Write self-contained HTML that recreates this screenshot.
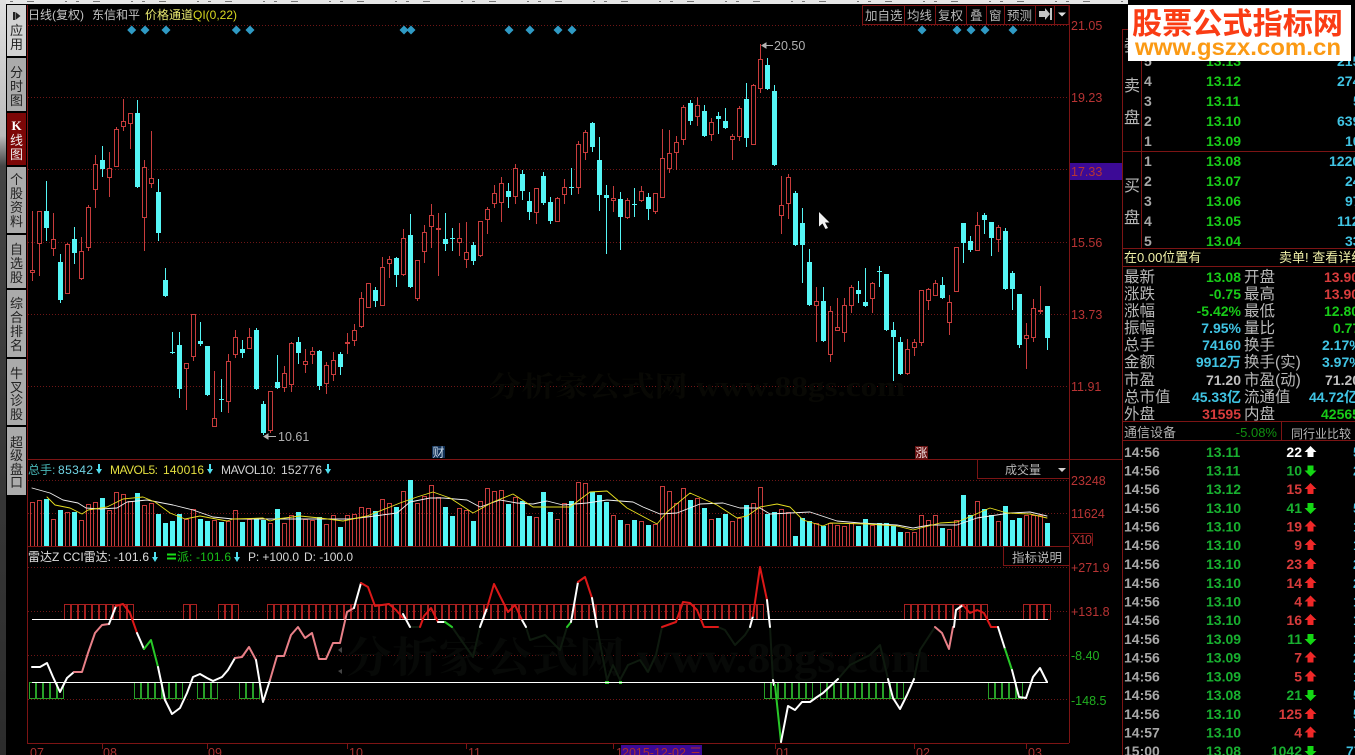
<!DOCTYPE html>
<html><head><meta charset="utf-8"><title>K线图</title>
<style>
html,body{margin:0;padding:0;background:#000;width:1355px;height:755px;overflow:hidden}
svg{display:block;position:absolute;left:0;top:0}
text{font-family:"Liberation Sans","Noto Sans CJK SC",sans-serif;white-space:pre}
.a{fill:#b83434;font-size:12.5px}
.g{fill:#20b020;font-size:12.5px}
.t{font-size:12px;fill:#c4c4c4}
.s{font-size:13px;fill:#222;text-anchor:middle}
.lb{font-size:16px;fill:#b8b8b8}
.n{font-size:14px;font-weight:bold}
.e{text-anchor:end}
.gr{fill:#18cc18}.cy{fill:#40c4e4}.rd{fill:#d83c3c}.wh{fill:#b8b8b8}.gd{fill:#c0c0c0}
.tm{font-size:14px;font-weight:bold;fill:#a8a8a8}
.pr{font-size:14px;font-weight:bold;fill:#18b030}
.bt{font-size:12.5px;fill:#b8b8b8}
</style></head>
<body>
<svg id="s" xmlns="http://www.w3.org/2000/svg" width="1355" height="755" viewBox="0 0 1355 755" shape-rendering="crispEdges">
<defs><linearGradient id="lg" x1="0" y1="0" x2="0" y2="1"><stop offset="0" stop-color="#e0e0e0"/><stop offset=".18" stop-color="#bbb"/><stop offset=".22" stop-color="#444"/><stop offset="1" stop-color="#2c2c2c"/></linearGradient></defs>
<rect width="1355" height="755" fill="#000"/>
<rect x="0" y="0" width="6" height="755" fill="url(#lg)"/>
<rect x="6" y="0" width="1122" height="4" fill="#e6e6e6"/>
<path d="M10 1.5H1128" stroke="#777" stroke-width="1" stroke-dasharray="3 14 7 31 2 9" fill="none"/>

<!-- sidebar -->
<g shape-rendering="auto">
<rect x="7" y="5" width="19" height="51" fill="#d2d2d2"/>
<rect x="7" y="58" width="19" height="53" fill="#ababab"/>
<rect x="7" y="113" width="19" height="52" fill="#7c0606"/>
<rect x="7" y="167" width="19" height="66" fill="#ababab"/>
<rect x="7" y="235" width="19" height="53" fill="#ababab"/>
<rect x="7" y="290" width="19" height="67" fill="#ababab"/>
<rect x="7" y="359" width="19" height="66" fill="#ababab"/>
<rect x="7" y="427" width="19" height="68" fill="#ababab"/>
<path d="M13 12v8h2v-8zM15.5 12v8l5-4z" fill="#222"/>
<text class="s" x="16.5" y="35">应</text><text class="s" x="16.5" y="49">用</text>
<text class="s" x="16.5" y="77">分</text><text class="s" x="16.5" y="91">时</text><text class="s" x="16.5" y="105">图</text>
<text x="16.5" y="130" style="font-family:'Liberation Serif';font-weight:bold;font-size:13px;fill:#fff;text-anchor:middle">K</text>
<text class="s" x="16.5" y="145" style="fill:#eee">线</text><text class="s" x="16.5" y="159" style="fill:#eee">图</text>
<text class="s" x="16.5" y="184">个</text><text class="s" x="16.5" y="198">股</text><text class="s" x="16.5" y="212">资</text><text class="s" x="16.5" y="226">料</text>
<text class="s" x="16.5" y="254">自</text><text class="s" x="16.5" y="268">选</text><text class="s" x="16.5" y="282">股</text>
<text class="s" x="16.5" y="308">综</text><text class="s" x="16.5" y="322">合</text><text class="s" x="16.5" y="336">排</text><text class="s" x="16.5" y="350">名</text>
<text class="s" x="16.5" y="378">牛</text><text class="s" x="16.5" y="392">叉</text><text class="s" x="16.5" y="405">诊</text><text class="s" x="16.5" y="419">股</text>
<text class="s" x="16.5" y="447">超</text><text class="s" x="16.5" y="460">级</text><text class="s" x="16.5" y="474">盘</text><text class="s" x="16.5" y="487">口</text>
</g>

<!-- grid -->
<g stroke="#6e1616" stroke-width="1" stroke-dasharray="1 2" fill="none">
<path d="M28 25.5H1069M28 97.5H1069M28 169.5H1069M28 242.5H1069M28 314.5H1069M28 386.5H1069M28 480.5H1069M28 513.5H1069M28 567.5H1069M28 611.5H1069M28 655.5H1069M28 699.5H1069"/>
</g>

<!-- watermark -->
<g shape-rendering="auto">
<text x="488" y="396" textLength="417" lengthAdjust="spacingAndGlyphs" style="font-family:'Liberation Serif','Noto Serif CJK SC',serif;font-size:28px;font-weight:bold;fill:#080804">分析家公式网 www.88gs.com</text>
<text x="345" y="672" textLength="585" lengthAdjust="spacingAndGlyphs" style="font-family:'Liberation Serif','Noto Serif CJK SC',serif;font-size:42px;font-weight:bold;fill:#070907">分析家公式网 www.88gs.com</text>
<path d="M342 647l-4 3 4 3zM342 669l-4 2 4 3z" fill="#444"/>
</g>

<g id="chart"></g>

<!-- frame -->
<g stroke="#7c1414" stroke-width="1" fill="none">
<path d="M27.5 5V743M1069.5 5V743M1122.5 29V755M27 459.5H1122M27 546.5H1069M27 743.5H1069"/>
<path d="M862.5 5.5H1069V24.5H862.5ZM904.5 5V24M935.5 5V24M966.5 5V24M986.5 5V24M1004.5 5V24M1035.5 5V24M1054.5 5V24"/>
<path d="M977.5 460V478.5H1069M1070.5 533.5H1092.5V546M1003.5 547V565.5H1069"/>
<path d="M102.5 743V749M207.5 743V749M347.5 743V749M466.5 743V749M613.5 743V749M775.5 743V749M914.5 743V749M1026.5 743V749"/>
<path d="M1122 29.5H1128M1122 151.5H1355M1122 248.5H1355M1122 266.5H1355M1122 421.5H1355M1122 440.5H1355M1141.5 29V248M1281.5 422V441"/>
</g>

<g shape-rendering="auto">
<!-- diamonds -->
<g fill="#2f9ac4" id="dm"></g>

<!-- title -->
<text class="t" x="28" y="19">日线(复权)</text>
<text class="t" x="92" y="19">东信和平</text>
<text class="t" x="145" y="19" style="fill:#e8e870">价格通道</text>
<text class="t" x="193" y="19" textLength="44" style="fill:#d8d820">QI(0,22)</text>

<!-- toolbar -->
<text class="bt" x="865" y="20">加自选</text>
<text class="bt" x="907" y="20">均线</text>
<text class="bt" x="938" y="20">复权</text>
<text class="bt" x="970" y="20">叠</text>
<text class="bt" x="989" y="20">窗</text>
<text class="bt" x="1007" y="20">预测</text>
<path d="M1039 11h6v-3l5 6-5 6v-3h-6zM1050 8h2v12h-2z" fill="#c4c4c4"/>
<path d="M1058 12.5h8l-4 4z" fill="#e0e0e0"/>

<!-- axis main -->
<rect x="1070" y="163" width="52" height="17" fill="#3c0a96"/>
<text class="a" x="1071" y="30">21.05</text>
<text class="a" x="1071" y="102">19.23</text>
<text class="a" x="1071" y="176">17.33</text>
<text class="a" x="1071" y="247">15.56</text>
<text class="a" x="1071" y="319">13.73</text>
<text class="a" x="1071" y="391">11.91</text>

<!-- hi lo labels -->
<path d="M773 45.5H764M766 43l-4 2.500 4 2.500z" stroke="#b4b4b4" fill="#b4b4b4"/>
<text x="774" y="50" style="font-size:12.500px;fill:#b0b0b0">20.50</text>
<path d="M276 436.500H266M268 434l-4 2.500 4 2.500z" stroke="#b4b4b4" fill="#b4b4b4"/>
<text x="278" y="441" style="font-size:12.500px;fill:#b0b0b0">10.61</text>

<!-- badges -->
<rect x="432" y="446" width="13" height="12" fill="#113056"/>
<text x="438.500" y="456.500" style="font-size:12px;fill:#c8d8e8;text-anchor:middle">财</text>
<rect x="915" y="446" width="13" height="13" fill="#661212"/>
<text x="921.500" y="457" style="font-size:12px;fill:#f0e0e0;text-anchor:middle">涨</text>

<!-- volume legend -->
<text class="t" x="28" y="474" style="fill:#48b8b8">总手:</text>
<text class="t" x="58" y="474" textLength="35" style="fill:#70d4e4">85342</text>
<text class="t" x="110" y="474" textLength="48" style="fill:#e4e040">MAVOL5:</text>
<text class="t" x="163" y="474" textLength="41" style="fill:#e4e040">140016</text>
<text class="t" x="221" y="474" textLength="55" style="fill:#d0d0d0">MAVOL10:</text>
<text class="t" x="281" y="474" textLength="41" style="fill:#d0d0d0">152776</text>
<text class="bt" x="1005" y="474" style="font-size:12px">成交量</text>
<path d="M1058 468h8l-4 4z" fill="#d0d0d0"/>
<text class="a" x="1071" y="485">23248</text>
<text class="a" x="1071" y="518">11624</text>
<text class="a" x="1072" y="544" textLength="20">X10</text>

<!-- cci legend -->
<text class="t" x="28" y="561" style="fill:#e0e0e0">雷达Z</text>
<text class="t" x="63" y="561" textLength="48" style="fill:#e0e0e0">CCI雷达:</text>
<text class="t" x="114" y="561" textLength="35" style="fill:#e0e0e0">-101.6</text>
<path d="M167 553.500h9v2h-9zM167 557.500h9v2h-9z" fill="#18e018"/>
<text class="t" x="177" y="561" style="fill:#18c018">派:</text>
<text class="t" x="196" y="561" textLength="35" style="fill:#18c018">-101.6</text>
<text class="t" x="248" y="561" textLength="51" style="fill:#d8d8d8">P: +100.0</text>
<text class="t" x="304" y="561" textLength="49" style="fill:#d8d8d8">D: -100.0</text>
<text class="bt" x="1012" y="562">指标说明</text>
<text class="a" x="1071" y="572">+271.9</text>
<text class="a" x="1071" y="616">+131.8</text>
<text class="g" x="1071" y="660">-8.40</text>
<text class="g" x="1071" y="705">-148.5</text>

<!-- date axis -->
<rect x="621" y="745" width="81" height="10" fill="#3c0a96"/>
<g style="font-size:12.500px;fill:#a83030">
<text x="30" y="757">07</text><text x="103" y="757">08</text><text x="208" y="757">09</text><text x="349" y="757">10</text><text x="468" y="757">11</text>
<text x="616" y="757">1</text><text x="622" y="757">2015-12-02 三</text>
<text x="776" y="757">01</text><text x="916" y="757">02</text><text x="1028" y="757">03</text>
</g>

<!-- cursor -->
<path d="M819 212V226.500L822.500 223.500L825.500 229L828 228L825 222.500H829.500Z" fill="#f0f0f0"/>

<!-- order book -->
<text class="n wh" x="1144" y="66">5</text>
<g class="n" style="fill:#a8a8a8"><text x="1144" y="86">4</text><text x="1144" y="106">3</text><text x="1144" y="126">2</text><text x="1144" y="146">1</text><text x="1144" y="166">1</text><text x="1144" y="186">2</text><text x="1144" y="206">3</text><text x="1144" y="226">4</text><text x="1144" y="246">5</text></g>
<g class="n gr"><text x="1206" y="66">13.13</text><text x="1206" y="86">13.12</text><text x="1206" y="106">13.11</text><text x="1206" y="126">13.10</text><text x="1206" y="146">13.09</text><text x="1206" y="166">13.08</text><text x="1206" y="186">13.07</text><text x="1206" y="206">13.06</text><text x="1206" y="226">13.05</text><text x="1206" y="246">13.04</text></g>
<g class="n cy"><text x="1337" y="66">215</text><text x="1337" y="86">274</text><text x="1353" y="106">5</text><text x="1337" y="126">639</text><text x="1345" y="146">10</text><text x="1329" y="166">1220</text><text x="1345" y="186">24</text><text x="1345" y="206">97</text><text x="1337" y="226">112</text><text x="1345" y="246">33</text></g>
<text class="lb" x="1124" y="51">委</text>
<text class="lb" x="1124" y="91">卖</text><text class="lb" x="1124" y="123">盘</text>
<text class="lb" x="1124" y="191">买</text><text class="lb" x="1124" y="223">盘</text>
<text x="1124" y="262" style="font-size:13px;fill:#f0f0a8">在0.00位置有</text>
<text x="1279" y="262" style="font-size:13px;fill:#f0f0a8">卖单! 查看详细</text>

<!-- stats -->
<g class="lb" style="font-size:15.500px">
<text x="1124" y="282">最新</text><text x="1124" y="299">涨跌</text><text x="1124" y="316">涨幅</text><text x="1124" y="333">振幅</text><text x="1124" y="350">总手</text><text x="1124" y="367">金额</text><text x="1124" y="385">市盈</text><text x="1124" y="402">总市值</text><text x="1124" y="419">外盘</text>
<text x="1244" y="282">开盘</text><text x="1244" y="299">最高</text><text x="1244" y="316">最低</text><text x="1244" y="333">量比</text><text x="1244" y="350">换手</text><text x="1244" y="367">换手(实)</text><text x="1244" y="385">市盈(动)</text><text x="1244" y="402">流通值</text><text x="1244" y="419">内盘</text>
</g>
<g class="n e">
<text class="gr" x="1241" y="282">13.08</text><text class="gr" x="1241" y="299">-0.75</text><text class="gr" x="1241" y="316">-5.42%</text><text class="cy" x="1241" y="333">7.95%</text><text class="cy" x="1241" y="350">74160</text><text class="cy" x="1241" y="367">9912万</text><text class="gd" x="1241" y="385">71.20</text><text class="cy" x="1241" y="402">45.33亿</text><text class="rd" x="1241" y="419">31595</text>
</g>
<g class="n">
<text class="rd" x="1324" y="282">13.90</text><text class="rd" x="1324" y="299">13.90</text><text class="gr" x="1324" y="316">12.80</text><text class="gr" x="1333" y="333">0.77</text><text class="cy" x="1322" y="350">2.17%</text><text class="cy" x="1322" y="367">3.97%</text><text class="gd" x="1325" y="385">71.20</text><text class="cy" x="1309" y="402">44.72亿</text><text class="gr" x="1321" y="419">42565</text>
</g>
<text x="1124" y="437" style="font-size:13px;fill:#b0b0b0">通信设备</text>
<text x="1277" y="437" style="font-size:13px;fill:#109010;text-anchor:end">-5.08%</text>
<text x="1291" y="438" style="font-size:12px;fill:#b8b8b8">同行业比较</text>

<!-- ticks -->
<g class="tm"><text x="1124" y="457">14:56</text><text x="1124" y="475.500">14:56</text><text x="1124" y="494">14:56</text><text x="1124" y="513">14:56</text><text x="1124" y="531.500">14:56</text><text x="1124" y="550">14:56</text><text x="1124" y="569">14:56</text><text x="1124" y="588">14:56</text><text x="1124" y="606.500">14:56</text><text x="1124" y="625">14:56</text><text x="1124" y="644">14:56</text><text x="1124" y="662.500">14:56</text><text x="1124" y="681.500">14:56</text><text x="1124" y="700">14:56</text><text x="1124" y="719">14:56</text><text x="1124" y="737.500">14:57</text><text x="1124" y="756">15:00</text></g>
<g class="pr"><text x="1206" y="457">13.11</text><text x="1206" y="475.500">13.11</text><text x="1206" y="494">13.12</text><text x="1206" y="513">13.10</text><text x="1206" y="531.500">13.10</text><text x="1206" y="550">13.10</text><text x="1206" y="569">13.10</text><text x="1206" y="588">13.10</text><text x="1206" y="606.500">13.10</text><text x="1206" y="625">13.10</text><text x="1206" y="644">13.09</text><text x="1206" y="662.500">13.09</text><text x="1206" y="681.500">13.09</text><text x="1206" y="700">13.08</text><text x="1206" y="719">13.10</text><text x="1206" y="737.500">13.10</text><text x="1206" y="756">13.08</text></g>
<g class="n e">
<text x="1302" y="457" style="fill:#fff">22</text>
<text x="1302" y="475.500" style="fill:#18b030">10</text>
<text x="1302" y="494" class="rd">15</text>
<text x="1302" y="513" style="fill:#18b030">41</text>
<text x="1302" y="531.500" class="rd">19</text>
<text x="1302" y="550" class="rd">9</text>
<text x="1302" y="569" class="rd">23</text>
<text x="1302" y="588" class="rd">14</text>
<text x="1302" y="606.500" class="rd">4</text>
<text x="1302" y="625" class="rd">16</text>
<text x="1302" y="644" style="fill:#18b030">11</text>
<text x="1302" y="662.500" class="rd">7</text>
<text x="1302" y="681.500" class="rd">5</text>
<text x="1302" y="700" style="fill:#18b030">21</text>
<text x="1302" y="719" class="rd">125</text>
<text x="1302" y="737.500" class="rd">4</text>
<text x="1302" y="756" style="fill:#18b030">1042</text>
</g>
<g id="arr"></g>
<g class="n cy"><text x="1353" y="457">5</text><text x="1353" y="475.500">2</text><text x="1353" y="513">5</text><text x="1353" y="531.500">1</text><text x="1353" y="550">1</text><text x="1353" y="569">2</text><text x="1353" y="588">2</text><text x="1353" y="606.500">1</text><text x="1353" y="625">1</text><text x="1353" y="644">1</text><text x="1353" y="662.500">2</text><text x="1353" y="681.500">1</text><text x="1353" y="700">5</text><text x="1353" y="719">5</text><text x="1353" y="737.500">1</text><text x="1346" y="756">77</text></g>

<!-- logo -->
<rect x="1128" y="5" width="223" height="56" fill="#fff"/>
<text x="1132" y="34" textLength="211" lengthAdjust="spacingAndGlyphs" style="font-family:'Noto Sans CJK SC','Liberation Sans',sans-serif;font-size:30px;font-weight:bold;fill:#fa3c14">股票公式指标网</text>
<text x="1135" y="55" textLength="206" lengthAdjust="spacingAndGlyphs" style="font-size:23px;font-weight:bold;fill:#fb9a14">www.gszx.com.cn</text>
</g>
</svg>
<script>
var NS="http://www.w3.org/2000/svg",ch=document.getElementById("chart");
function E(p,tag,a){var e=document.createElementNS(NS,tag);for(var k in a)e.setAttribute(k,a[k]);p.appendChild(e);return e}
var C=[[0,211,270,272,280],[0,211,211,243,275],[1,181,211,228,240],[0,213,239,248,255],[1,254,262,300,302],[0,243,244,293,293],[1,227,239,253,263],[0,237,251,278,279],[0,205,207,247,250],[0,155,164,189,207],
[1,146,160,169,176],[0,152,168,177,196],[0,127,129,166,166],[0,99,121,126,130],[0,113,113,123,148],[1,100,113,187,187],[0,160,167,217,250],[0,131,178,183,187],[1,179,192,233,240],[1,268,280,296,296],
[1,332,352,353,353],[1,332,345,389,397],[0,363,363,368,409],[0,314,314,356,360],[1,322,341,344,345],[1,346,346,395,395],[0,371,418,426,426],[1,379,399,400,411],[0,354,361,401,412],[0,330,337,354,357],
[1,340,349,353,357],[0,328,337,348,348],[1,328,330,389,389],[1,401,404,433,434],[0,391,391,430,432],[1,355,382,388,388],[0,366,373,387,391],[0,342,343,384,391],[1,337,342,353,363],[0,349,361,364,372],
[0,347,351,354,363],[1,350,351,386,389],[0,362,365,383,393],[0,352,360,374,380],[1,352,354,367,374],[0,333,342,343,353],[0,324,330,340,345],[0,292,298,326,327],[0,283,283,307,307],[1,287,290,301,306],
[0,257,267,305,305],[0,256,259,263,277],[1,257,258,275,286],[0,229,238,274,275],[1,214,235,287,287],[0,260,260,298,300],[0,225,232,251,262],[0,204,215,226,247],[0,213,228,229,275],[1,213,239,244,250],
[1,228,238,239,250],[0,223,238,242,255],[0,222,252,259,267],[1,242,245,261,264],[0,221,221,255,256],[0,207,209,219,233],[0,185,193,203,207],[0,177,183,202,221],[1,183,191,197,207],[0,164,168,196,203],
[1,170,174,191,199],[1,192,201,212,219],[0,188,188,212,223],[1,172,176,203,204],[1,197,202,221,223],[0,197,198,221,221],[0,179,187,194,203],[1,168,187,188,194],[0,141,144,187,193],[0,130,132,152,159],
[1,122,123,147,151],[1,137,160,195,210],[1,185,195,198,253],[0,186,198,200,211],[1,192,199,217,249],[0,198,200,217,218],[1,188,204,205,216],[0,186,191,200,201],[1,193,197,209,219],[0,193,193,211,213],
[0,129,158,197,197],[0,130,153,168,172],[0,136,142,152,169],[0,105,107,139,144],[1,100,103,121,124],[0,97,105,116,125],[1,105,111,136,136],[0,118,122,134,140],[1,112,116,119,133],[1,108,121,128,128],
[0,134,136,139,159],[0,106,108,136,140],[1,83,99,138,146],[0,84,85,144,144],[0,44,59,88,92],[1,58,65,89,89],[1,85,91,165,165],[0,176,205,215,233],[0,174,177,203,218],[1,191,193,245,245],
[1,208,223,245,282],[1,249,262,305,305],[0,287,301,305,341],[1,287,301,341,341],[0,306,311,354,361],[0,298,327,330,330],[0,298,305,332,341],[0,285,287,305,312],[1,281,290,294,302],[1,268,302,306,306],
[0,282,283,298,312],[1,266,271,272,286],[1,274,274,330,330],[1,322,330,337,380],[1,337,342,374,374],[0,339,349,373,374],[0,339,342,347,355],[0,290,290,342,345],[0,288,289,300,309],[0,280,283,295,295],
[1,277,285,298,298],[0,295,302,322,334],[0,247,247,291,291],[1,223,223,243,262],[1,236,241,250,251],[0,212,225,250,250],[1,213,215,220,233],[1,222,222,238,255],[0,225,227,239,251],[1,228,231,289,289],
[1,271,273,289,309],[1,294,294,345,347],[0,323,335,338,368],[0,299,308,337,341],[0,286,310,311,313],[1,306,306,338,349]];
var V=[502,500,-499,519,-510,512,-512,520,504,502,-498,510,492,494,501,-493,505,503,-514,-523,-521,-514,519,509,-519,-521,520,-522,521,510,-522,519,-519,-520,523,-509,523,515,-512,519,520,-517,524,515,-527,515,514,507,508,-511,499,503,-507,
491,-480,503,496,485,497,-507,-516,508,510,-521,501,488,491,490,-504,497,-501,-516,517,-492,-512,519,503,-501,482,483,-492,-495,-502,515,-520,524,-520,521,-525,524,486,491,503,488,-500,498,-508,519,-518,-514,521,518,-505,503,487,-514,-512,509,512,-536,
-518,-521,523,-526,523,525,526,523,-526,-519,525,-523,-523,-526,-532,532,532,515,520,515,-528,529,520,-495,-515,501,-509,-515,521,-506,-520,-518,515,515,515,-523];
var RED="#c83c3c",CY="#55f6f6";
function px(i){return Math.floor(32.4+7*i)}
C.forEach(function(c,i){var x=px(i);
 if(c[0]){E(ch,"rect",{x:x,y:c[1],width:1,height:c[4]-c[1]+1,fill:CY});E(ch,"rect",{x:x-2,y:c[2],width:5,height:Math.max(c[3]-c[2],1),fill:CY})}
 else{E(ch,"rect",{x:x,y:c[1],width:1,height:c[4]-c[1]+1,fill:RED});E(ch,"rect",{x:x-2+.5,y:c[2]+.5,width:4,height:Math.max(c[3]-c[2],1),fill:"#000",stroke:RED})}
});
V.forEach(function(v,i){var x=px(i),t=Math.abs(v);
 if(v<0)E(ch,"rect",{x:x-2,y:t,width:5,height:546-t,fill:CY});
 else E(ch,"rect",{x:x-2+.5,y:t+.5,width:4,height:546-t,fill:"none",stroke:RED});
});
function P(pts,col,w){var g=E(ch,"polyline",{points:pts,fill:"none",stroke:col,"stroke-width":w||1,"stroke-linejoin":"round","stroke-linecap":"round","shape-rendering":"auto"})}
P("32,488 50,493 63,500 78,503 86,508 100,509 117,508 127,502 147,500 173,505 193,510 213,517 233,519 263,519 277,519 300,519 333,519 350,519 367,517 397,513 410,502 430,498 443,498 467,500 480,507 500,500 517,503 533,504 547,501 563,505 587,503 607,500 633,502 643,507 660,514 677,513 700,504 723,503 740,508 760,508 770,514 790,513 810,512 837,521 860,523 897,525 913,528 930,525 957,525 977,518 990,516 1010,513 1030,512 1047,516","#f0f0f0",.9);
P("47,497 55,505 70,508 82,514 88,510 107,507 117,502 123,499 143,497 155,502 170,513 185,519 200,516 227,521 233,519 263,518 270,521 277,519 300,516 320,518 343,521 367,516 390,507 400,503 417,497 433,492 450,498 473,513 493,502 513,494 533,507 547,507 570,507 590,492 607,491 627,508 657,524 667,512 690,493 717,505 737,518 747,516 760,507 777,504 790,507 803,520 823,526 830,523 867,524 897,526 913,530 940,523 957,522 967,518 990,508 1007,513 1030,514 1047,518","#e8e020",.9);
function box(a,b,top,h,col){for(var i=a;i<=b;i++){E(ch,"rect",{x:px(i)-3+.5,y:top+.5,width:6,height:h,fill:"none",stroke:col})}}
var BR="#a82020",BG="#28a028";
[[5,14],[22,23],[27,29],[34,104],[125,136],[142,145]].forEach(function(r){box(r[0],r[1],604,15,BR)});
[[0,4],[15,21],[24,26],[30,32],[105,111],[113,124],[137,141]].forEach(function(r){box(r[0],r[1],682,16,BG)});
E(ch,"rect",{x:605,y:681,width:4,height:3,fill:"#28c828"});E(ch,"rect",{x:619,y:681,width:3,height:3,fill:"#28c828"});
E(ch,"rect",{x:32,y:619,width:1016,height:1,fill:"#fff"});E(ch,"rect",{x:32,y:682,width:1016,height:1,fill:"#fff"});
["410,627 420,627","452,627 473,657 480,627","526,627 530,640 545,635 560,650 567,627","597,627 607,680 613,665 620,680 628,665 640,660 648,672 656,655 662,627","718,627 725,630 735,645 745,635 750,627","770,627 773,680","838,679 850,665 870,655 880,645 888,679","914,679 920,650 935,627"].forEach(function(s){P(s,"#0e1a0e",2)});
var W="#fff",K="#e88088",R="#dc1818",G="#28c828";
[[W,"32,667 40,667 47,663 53,677 60,692 67,678 74,672"],[K,"74,672 82,672 88,653 95,633 102,625 109,624"],[W,"109,624 116,606"],[R,"116,606 123,604 130,613 137,633"],[W,"137,633 144,649"],[G,"144,649 151,640 158,667"],
[W,"158,667 165,700 172,714 180,708 187,693 193,677 200,674 207,678 213,681 222,677 228,670 235,658"],[K,"235,658 242,657 249,647 256,660"],[W,"256,660 263,702 270,680"],[K,"270,680 277,656 284,656 291,635 298,627 305,638 312,633 319,659 326,659 333,643 340,643 347,612 354,608"],[W,"354,608 361,583"],[R,"361,583 368,587 375,606 382,605 389,604 396,610 403,618"],[W,"403,614 410,627"],
[R,"420,627 424,616 431,608 438,622"],[W,"438,622 445,622"],[G,"445,622 452,627"],[W,"480,627 487,608"],[R,"487,608 494,584 501,598 508,612 515,605 522,620"],[W,"522,620 526,627"],[G,"567,627 571,622"],[W,"571,622 578,582"],[R,"578,582 585,577 592,598"],[W,"592,598 597,627"],
[R,"662,627 676,622 683,602 690,603 697,610 704,627 718,627"],[W,"750,627 753,616"],[R,"753,616 760,567 767,600"],[W,"767,600 770,627"],[W,"773,680 774,685"],[G,"775,685 781,742"],[W,"781,742 788,706 795,710 802,702 810,702 817,697 823,693 838,679"],[W,"888,679 893,698 900,709 907,695 914,679"],
[K,"935,627 942,633 949,649 953,627"],[W,"954,627 956,610 963,605"],[R,"963,605 970,613 977,610 984,613 991,627 998,627"],[W,"998,627 1005,649"],[G,"1005,649 1012,670"],[W,"1012,670 1019,697 1026,698 1033,677 1040,668 1047,682"]
].forEach(function(s){P(s[1],s[0],2)});
var dm=document.getElementById("dm");
[131.7,145,166,236.3,250,404,411,509,530,558,572,922,957,971,985,1013].forEach(function(x){E(dm,"path",{d:"M"+x+" 25.500l4.500 4.500-4.500 4.500-4.500-4.500z"})});
var a=document.getElementById("arr");
function up(c,y,col){E(a,"path",{d:"M"+c+" "+(y-6)+"l6 6h-3v5h-6v-5h-3z",fill:col})}
function dn(c,y,col){E(a,"path",{d:"M"+c+" "+(y+6)+"l6-6h-3v-5h-6v5h-3z",fill:col})}
var ys=[452,470.5,489,508,526.5,545,564,583,601.5,620,639,657.5,676.5,695,714,732.5,751],cols="wgrgrrrrrrgrrgrrg";
for(var i=0;i<17;i++){var c=cols[i];if(c=="g")dn(1310.5,ys[i],"#14d814");else up(1310.5,ys[i],c=="w"?"#fff":"#f02828")}
function sm(x,y){E(a,"path",{d:"M"+(x-1)+" "+(y-5)+"h2v5h2l-3 5-3-5h2z",fill:"#50e0f0"})}
[[99,469],[210,469],[328,469],[155,557],[237,557]].forEach(function(p){sm(p[0],p[1])});
</script>
</body></html>
